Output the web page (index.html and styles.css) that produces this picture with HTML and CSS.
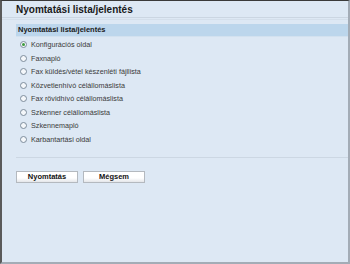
FILE: index.html
```html
<!doctype html>
<html lang="hu">
  <head>
    <meta charset="UTF-8" />
    <title>Nyomtatási lista/jelentés</title>
    <link rel="stylesheet" href="styles.css">
  </head>
  <body>
    <div class="frame">
      <h1 class="page-title">Nyomtatási lista/jelentés</h1>
      <div class="rule-double"></div>
      <div class="section-head">Nyomtatási lista/jelentés</div>
      <ul class="report-list">
        <li><span class="radio checked"></span>Konfigurációs oldal</li>
        <li><span class="radio"></span>Faxnapló</li>
        <li><span class="radio"></span>Fax küldés/vétel készenléti fájllista</li>
        <li><span class="radio"></span>Közvetlenhívó célállomáslista</li>
        <li><span class="radio"></span>Fax rövidhívó célállomáslista</li>
        <li><span class="radio"></span>Szkenner célállomáslista</li>
        <li><span class="radio"></span>Szkennemapló</li>
        <li><span class="radio"></span>Karbantartási oldal</li>
      </ul>
      <div class="rule"></div>
      <div class="actions">
        <button class="btn">Nyomtatás</button>
        <button class="btn">Mégsem</button>
      </div>
    </div>
  </body>
</html>
```

FILE: styles.css
```css
* {
  margin: 0;
  padding: 0;
  box-sizing: border-box;
}
body {
  background: #dde8f4;
  font-family: "Liberation Sans", Arial, sans-serif;
  color: #222;
  overflow: hidden;
}
.frame {
  height: 264px;
  border-top: 1px solid #3a3a3a;
  border-left: 2px solid #5a5a5a;
  border-right: 2px solid #a3acb6;
  border-bottom: 2px solid #a3acb6;
  background: #dde8f4;
}
.page-title {
  font-size: 10px;
  font-weight: bold;
  color: #1a1a1a;
  padding: 3px 0 0 14px;
  height: 16px;
  line-height: 12px;
}
.rule-double {
  height: 3px;
  border-top: 1px solid #cbd6e2;
  border-bottom: 1px solid #d4dfeb;
}
.section-head {
  margin-top: 4px;
  margin-left: 14px;
  height: 13px;
  background: #bcd6ec;
  border-bottom: 1px solid #d2e1ef;
  font-size: 7.5px;
  font-weight: bold;
  line-height: 12px;
  padding-left: 2px;
  color: #1a1a1a;
}
.report-list {
  list-style: none;
  padding: 1px 0 0 18px;
}
.report-list li {
  display: flex;
  align-items: center;
  height: 13.5px;
  font-size: 7.2px;
  color: #3a3a3a;
}
.radio {
  width: 7px;
  height: 7px;
  border: 1px solid #7d8c9c;
  border-radius: 50%;
  background: #f4f7fa;
  margin-right: 4px;
  position: relative;
}
.radio.checked::after {
  content: "";
  position: absolute;
  left: 1px;
  top: 1px;
  width: 3px;
  height: 3px;
  border-radius: 50%;
  background: #3d9a3d;
}
.rule {
  margin: 11px 0 0 14px;
  border-top: 1px solid #ccd7e3;
}
.actions {
  display: flex;
  gap: 5px;
  padding: 13px 0 0 14px;
}
.btn {
  width: 62px;
  height: 12px;
  font-family: inherit;
  font-size: 7.5px;
  font-weight: bold;
  line-height: 10px;
  color: #111;
  border: 1px solid #b4b9bf;
  background: linear-gradient(#ffffff, #ffffff 60%, #e4e6e9);
}
```
